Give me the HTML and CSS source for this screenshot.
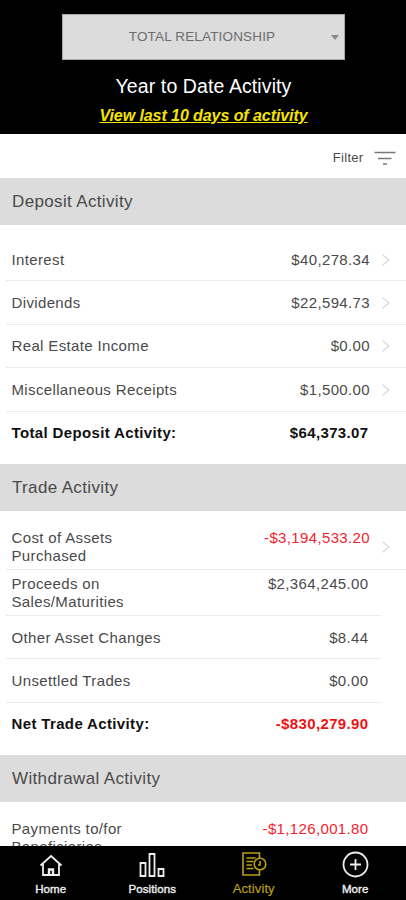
FILE: index.html
```
<!DOCTYPE html>
<html lang="en">
<head>
    <meta charset="UTF-8">
    <meta name="viewport" content="width=device-width, initial-scale=1.0">
    <title>Year to Date Activity</title>
    <link rel="stylesheet" href="styles.css">
</head>
<body>
    <div class="header">
        <div class="account-select">
            <span class="account-name">TOTAL RELATIONSHIP</span>
            <span class="caret"></span>
        </div>
        <h1>Year to Date Activity</h1>
        <a class="recent-link" href="#">View last 10 days of activity</a>
    </div>

    <div class="content">
        <div class="filter-bar">
            <span>Filter</span>
            <svg class="filter-icon" viewBox="0 0 22 14"><path d="M0.5 1.5h21M4 7.5h13.5M9 13h4"/></svg>
        </div>

        <h2 class="section-title">Deposit Activity</h2>
        <div class="section">
            <div class="row link">
                <span class="label">Interest</span>
                <span class="amount">$40,278.34</span>
                <svg class="chevron" viewBox="0 0 8 12"><path d="M0.5 0.7L7 6L0.5 11.3"/></svg>
            </div>
            <div class="row link">
                <span class="label">Dividends</span>
                <span class="amount">$22,594.73</span>
                <svg class="chevron" viewBox="0 0 8 12"><path d="M0.5 0.7L7 6L0.5 11.3"/></svg>
            </div>
            <div class="row link">
                <span class="label">Real Estate Income</span>
                <span class="amount">$0.00</span>
                <svg class="chevron" viewBox="0 0 8 12"><path d="M0.5 0.7L7 6L0.5 11.3"/></svg>
            </div>
            <div class="row link">
                <span class="label">Miscellaneous Receipts</span>
                <span class="amount">$1,500.00</span>
                <svg class="chevron" viewBox="0 0 8 12"><path d="M0.5 0.7L7 6L0.5 11.3"/></svg>
            </div>
            <div class="row total">
                <span class="label">Total Deposit Activity:</span>
                <span class="amount">$64,373.07</span>
            </div>
        </div>

        <h2 class="section-title">Trade Activity</h2>
        <div class="section">
            <div class="row link tall">
                <span class="label">Cost of Assets<br>Purchased</span>
                <span class="amount negative">-$3,194,533.20</span>
                <svg class="chevron" viewBox="0 0 8 12"><path d="M0.5 0.7L7 6L0.5 11.3"/></svg>
            </div>
            <div class="row tall">
                <span class="label">Proceeds on<br>Sales/Maturities</span>
                <span class="amount">$2,364,245.00</span>
            </div>
            <div class="row">
                <span class="label">Other Asset Changes</span>
                <span class="amount">$8.44</span>
            </div>
            <div class="row">
                <span class="label">Unsettled Trades</span>
                <span class="amount">$0.00</span>
            </div>
            <div class="row total">
                <span class="label">Net Trade Activity:</span>
                <span class="amount negative">-$830,279.90</span>
            </div>
        </div>

        <h2 class="section-title">Withdrawal Activity</h2>
        <div class="section">
            <div class="row tall">
                <span class="label">Payments to/for<br>Beneficiaries</span>
                <span class="amount negative">-$1,126,001.80</span>
            </div>
        </div>
    </div>

    <div class="tab-bar">
        <div class="tab">
            <svg viewBox="0 0 26 26">
                <path d="M2.5 13.5L13 4L23.5 13.5M5 12V23H21V12"/>
                <path d="M11 22.5V17.5H15V22.5" stroke-width="2.4"/>
            </svg>
            <span>Home</span>
        </div>
        <div class="tab">
            <svg viewBox="0 0 26 26">
                <path d="M1.5 11h5v13h-5zM10.5 2h5v22h-5zM19.5 17h5v7h-5z"/>
            </svg>
            <span>Positions</span>
        </div>
        <div class="tab active">
            <svg viewBox="0 0 26 26">
                <path d="M18.5 6V1H2V23H18.5V18"/>
                <path d="M5.5 6h9M5.5 9.5h7M5.5 13h5.5M5.5 16.5h7"/>
                <circle cx="19" cy="12" r="5.8"/>
                <path d="M19 9v4h-2"/>
            </svg>
            <span>Activity</span>
        </div>
        <div class="tab">
            <svg viewBox="0 0 26 26">
                <circle cx="13.5" cy="12.5" r="12"/>
                <path d="M13.5 7v11M8 12.5h11"/>
            </svg>
            <span>More</span>
        </div>
    </div>
</body>
</html>
```
FILE: styles.css
```
* { margin: 0; padding: 0; box-sizing: border-box; }
body {
    font-family: "Liberation Sans", Arial, sans-serif;
    background: #fff;
    color: #4a4a4a;
    height: 900px;
    display: flex;
    flex-direction: column;
    overflow: hidden;
}
.header {
    background: #000;
    height: 134px;
    padding-top: 14px;
    display: flex;
    flex-direction: column;
    align-items: center;
    flex-shrink: 0;
}
.account-select {
    width: 283px;
    height: 46px;
    margin-left: 1px;
    background: #dcdcdc;
    border: 1px solid #aaa;
    display: flex;
    align-items: center;
    padding: 0 5px 2px 0;
}
.account-name {
    flex: 1;
    text-align: center;
    padding-left: 10px;
    font-size: 13.5px;
    letter-spacing: 0.17px;
    color: #6c6c6c;
}
.caret {
    border: 4.5px solid transparent;
    border-top: 5px solid #888;
    border-bottom: 0;
    margin-top: 2px;
}
.header h1 {
    color: #fff;
    font-size: 19.5px;
    font-weight: normal;
    letter-spacing: 0.1px;
    line-height: 24px;
    margin-top: 14px;
    padding-left: 1px;
}
.recent-link {
    color: #f5e400;
    font-size: 16px;
    font-weight: bold;
    font-style: italic;
    letter-spacing: -0.07px;
    line-height: 20px;
    margin-top: 8px;
    padding-left: 1px;
}
.content {
    flex: 1;
    min-height: 0;
    overflow: hidden;
}
.filter-bar {
    height: 44.3px;
    padding: 3px 10px 0 0;
    display: flex;
    align-items: center;
    justify-content: flex-end;
    gap: 10.5px;
    font-size: 13px;
    letter-spacing: 0.3px;
}
.filter-icon {
    width: 22px;
    height: 14px;
    fill: none;
    stroke: #777;
    stroke-width: 1.5;
}
.section-title {
    height: 46.7px;
    line-height: 48px;
    padding-left: 12px;
    background: #dcdcdc;
    font-size: 17px;
    font-weight: normal;
    letter-spacing: 0.35px;
}
.section {
    padding: 13px 0 9.3px 6px;
}
.row {
    height: 43.4px;
    margin-right: 25px;
    padding: 1px 12.5px 0 5.5px;
    border-bottom: 1px solid #ebebeb;
    display: flex;
    align-items: center;
    font-size: 15px;
    line-height: 18px;
    letter-spacing: 0.36px;
}
.row.link {
    margin-right: 0;
    padding-right: 16px;
}
.row.tall {
    height: 46px;
}
.row.total {
    border-bottom: none;
    color: #111;
    font-weight: bold;
    padding-top: 0;
}
.label {
    flex: 1;
}
.amount {
    align-self: center;
}
.tall .amount {
    align-self: flex-start;
    margin-top: 4px;
}
.negative {
    color: #f5222d;
}
.total .negative {
    color: #ee1111;
}
.chevron {
    width: 8px;
    height: 12px;
    margin-left: 12px;
    fill: none;
    stroke: #d8d8d8;
    stroke-width: 1.2;
}
.tab-bar {
    height: 54px;
    background: #000;
    display: flex;
    flex-shrink: 0;
}
.tab {
    flex: 1;
    display: flex;
    flex-direction: column;
    align-items: center;
    padding-top: 6px;
    color: #eee;
    font-size: 11.5px;
    letter-spacing: 0.1px;
    -webkit-text-stroke: 0.4px currentColor;
}
.tab svg {
    width: 26px;
    height: 26px;
    fill: none;
    stroke: currentColor;
    stroke-width: 1.8;
    overflow: visible;
}
.tab span {
    line-height: 14px;
    margin-top: 4px;
}
.tab.active {
    color: #b89f14;
    font-size: 13px;
    -webkit-text-stroke: 0.2px currentColor;
}
.tab.active svg {
    stroke-width: 1.6;
}
```
